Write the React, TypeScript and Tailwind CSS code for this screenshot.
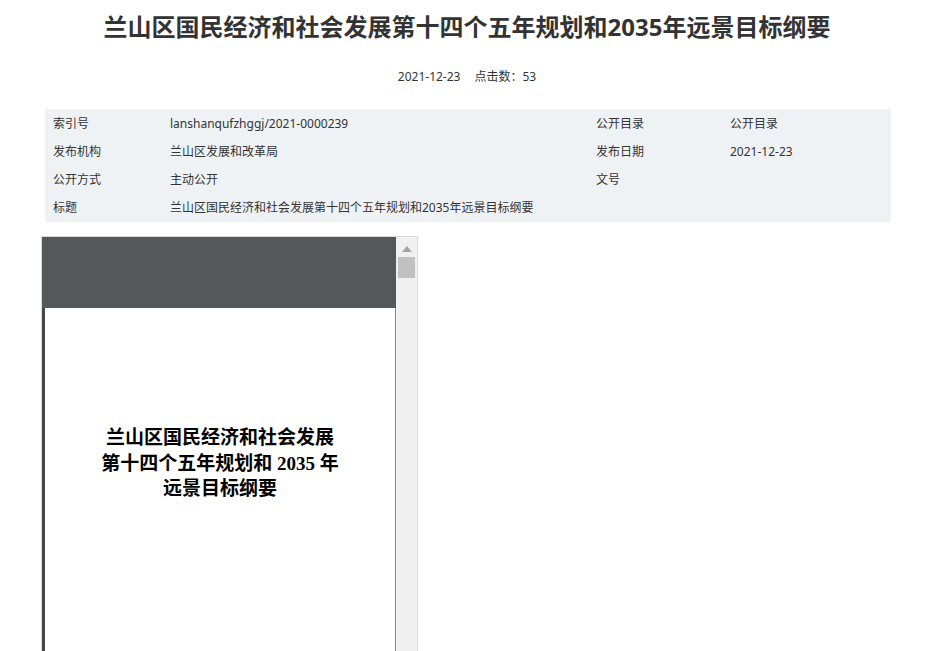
import React from 'react';

const rows: [string, string, string, string][] = [
  ['索引号', 'lanshanqufzhggj/2021-0000239', '公开目录', '公开目录'],
  ['发布机构', '兰山区发展和改革局', '发布日期', '2021-12-23'],
  ['公开方式', '主动公开', '文号', ''],
];

const sans = { fontFamily: '"Noto Sans", "Noto Sans CJK SC", sans-serif' };

export default function App() {
  return (
    <div className="min-h-[651px] bg-white text-[#333]" style={sans}>
      <h1 className="pt-[11px] text-center text-[24px] font-bold leading-[32px] text-[#333]">
        兰山区国民经济和社会发展第十四个五年规划和2035年远景目标纲要
      </h1>
      <div className="mt-[25px] flex justify-center gap-[14px] text-[12px] leading-[18px] text-[#333]">
        <span>2021-12-23</span>
        <span>点击数：53</span>
      </div>

      <div className="ml-[45px] mt-[23px] w-[846px] bg-[#eff2f5] py-[1px] text-[12px]">
        {rows.map((r) => (
          <div key={r[0]} className="flex h-[28px] items-center">
            <span className="w-[125px] pl-[8px]">{r[0]}</span>
            <span className="w-[426px]">{r[1]}</span>
            <span className="w-[134px]">{r[2]}</span>
            <span>{r[3]}</span>
          </div>
        ))}
        <div className="flex h-[27px] items-center">
          <span className="w-[125px] pl-[8px]">标题</span>
          <span>兰山区国民经济和社会发展第十四个五年规划和2035年远景目标纲要</span>
        </div>
      </div>

      {/* pdf viewer */}
      <div className="ml-[41px] mt-[14px] flex h-[420px] w-[377px] border border-b-0 border-[#d9d9d9]">
        <div className="flex w-[354px] flex-col bg-[#54585b]">
          <div className="h-[71px] shrink-0" />
          <div className="flex flex-1 bg-[#46494b] pl-[3px]">
            <div className="flex-1 border-r border-[#8a8a8a] bg-white">
              <div
                className="mt-[117px] text-center text-[19px] font-bold leading-[25.5px] text-black"
                style={{ fontFamily: '"Liberation Serif", "Noto Sans CJK SC", serif' }}
              >
                <div>兰山区国民经济和社会发展</div>
                <div>第十四个五年规划和 2035 年</div>
                <div>远景目标纲要</div>
              </div>
            </div>
          </div>
        </div>
        <div className="flex w-[21px] flex-col items-center bg-[#f0f0f0]">
          <svg width="10" height="6" viewBox="0 0 10 6" className="mt-[9px]">
            <polygon points="5,0 10,6 0,6" fill="#a3a3a3" />
          </svg>
          <div className="mt-[5px] h-[21px] w-[17px] bg-[#c1c1c1]" />
        </div>
      </div>
    </div>
  );
}
